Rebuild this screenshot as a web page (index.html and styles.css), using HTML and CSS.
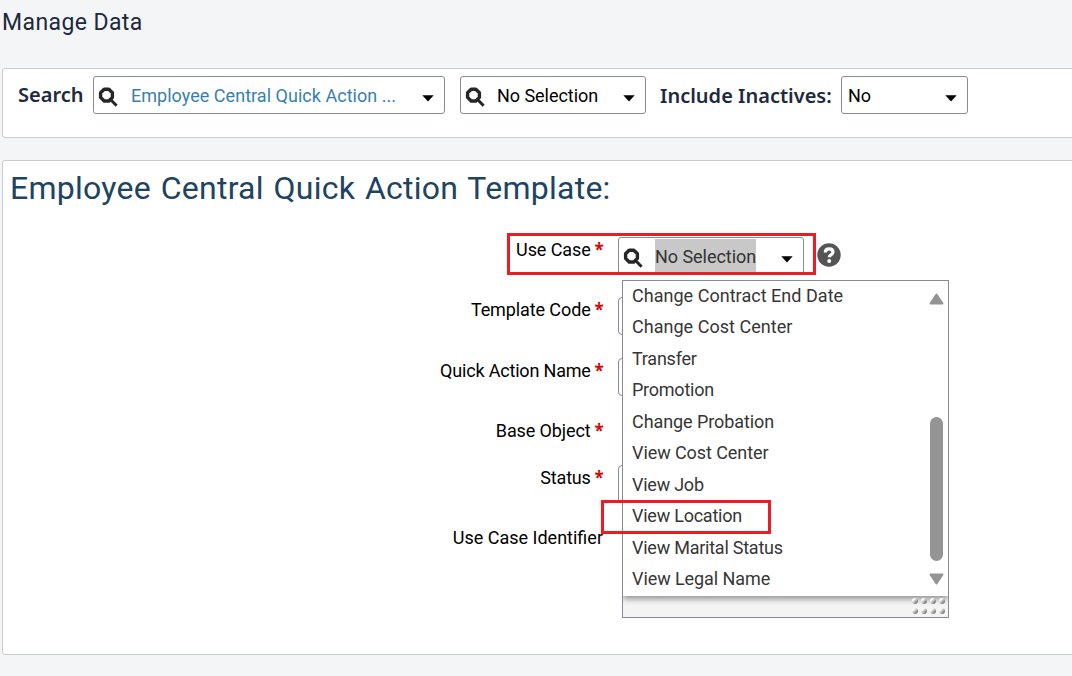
FILE: index.html
```
<!DOCTYPE html>
<html lang="en">
<head>
<meta charset="utf-8">
<title>Manage Data</title>
<link rel="stylesheet" href="styles.css">
</head>
<body>
<svg class="defs" aria-hidden="true">
  <symbol id="search" viewBox="0 0 20 20"><path d="M6.2 2.2h4.6l3.6 3.6v4.6l-3.6 3.6H6.2l-3.6-3.6V5.8z" fill="none" stroke="#262626" stroke-width="3.4" stroke-linejoin="round"/><path d="M12.8 12.8 18.6 18.8" fill="none" stroke="#262626" stroke-width="3"/></symbol>
  <symbol id="caret" viewBox="0 0 12 7"><path d="M.3.3h11.4L6 6.6z" fill="#000"/></symbol>
</svg>
<header class="page-head"><h1 class="page-title">Manage Data</h1></header>
<section class="panel search-panel">
  <span class="search-label">Search</span>
  <div class="combo combo-object"><svg class="mag"><use href="#search"/></svg><span class="value link">Employee Central Quick Action ...</span><svg class="caret"><use href="#caret"/></svg></div>
  <div class="combo combo-record"><svg class="mag"><use href="#search"/></svg><span class="value">No Selection</span><svg class="caret"><use href="#caret"/></svg></div>
  <span class="inactive-label">Include Inactives:</span>
  <div class="combo combo-inactive"><span class="value">No</span><svg class="caret"><use href="#caret"/></svg></div>
</section>
<main class="panel detail-panel">
  <h2 class="detail-title">Employee Central Quick Action Template:</h2>
  <div class="form">
    <div class="row row-case">
      <label class="label">Use Case <b>*</b></label>
      <div class="combo combo-case"><svg class="mag"><use href="#search"/></svg><span class="value selected">No Selection</span><svg class="caret"><use href="#caret"/></svg></div>
      <svg class="help" viewBox="0 0 24 24"><circle cx="12" cy="12" r="11.7" fill="#555"/><path d="M8.3 9.4c0-2.3 1.6-3.6 3.8-3.6s3.9 1.2 3.9 3.2c0 2.8-3.7 2.8-3.7 5.3" fill="none" stroke="#fff" stroke-width="3.2"/><circle cx="12.2" cy="18" r="2" fill="#fff"/></svg>
      <div class="mark mark-case"></div>
    </div>
    <div class="row row-code"><label class="label">Template Code <b>*</b></label><div class="input"></div></div>
    <div class="row row-name"><label class="label">Quick Action Name <b>*</b></label><div class="input"></div></div>
    <div class="row row-base"><label class="label">Base Object <b>*</b></label></div>
    <div class="row row-status"><label class="label">Status <b>*</b></label><div class="input"></div></div>
    <div class="row row-id"><label class="label">Use Case Identifier</label></div>
  </div>
  <div class="dropdown">
    <div class="list">
      <ul class="options">
        <li>Change Contract End Date</li>
        <li>Change Cost Center</li>
        <li class="tight">Transfer</li>
        <li class="tight">Promotion</li>
        <li class="snug">Change Probation</li>
        <li class="snug">View Cost Center</li>
        <li class="tight">View Job</li>
        <li class="tight">View Location</li>
        <li class="tight">View Marital Status</li>
        <li class="snug">View Legal Name</li>
      </ul>
      <div class="scrollbar">
        <svg class="arrow" viewBox="0 0 15 12"><path d="M7.5 1.5 13.5 10.5H1.5z" fill="#949494" stroke="#949494" stroke-width="2" stroke-linejoin="round"/></svg>
        <div class="thumb"></div>
        <svg class="arrow" viewBox="0 0 15 12"><path d="M7.5 10.5 13.5 1.5H1.5z" fill="#949494" stroke="#949494" stroke-width="2" stroke-linejoin="round"/></svg>
      </div>
    </div>
    <div class="grip-bar">
      <div class="grip"><i></i><i></i><i></i><i></i><i></i><i></i><i></i><i></i></div>
    </div>
    <div class="mark mark-location"></div>
  </div>
</main>
</body>
</html>
```

FILE: styles.css
```
* { box-sizing: border-box; }
body { margin: 0; height: 676px; overflow: hidden; background: #f4f5f7; font: 18px/24px Roboto, "Liberation Sans", sans-serif; color: #000; }
h1, h2, ul { margin: 0; padding: 0; font-weight: 400; list-style: none; }
.defs { display: none; }
.page-head { height: 68px; padding: 7px 0 0 2px; }
.page-title { font-size: 23px; line-height: 32px; color: #20293d; letter-spacing: .4px; white-space: nowrap; }
.panel { margin-left: 2px; margin-right: -4px; background: #fff; border: 1px solid #c5cdd2; border-radius: 3px; }
.search-panel { height: 70px; display: flex; align-items: flex-start; padding: 7px 0 0 15px; }
.search-label, .inactive-label { color: #20293d; font-family: "Noto Sans", sans-serif; font-weight: 600; font-size: 20px; line-height: 38px; white-space: nowrap; }
.search-label { width: 75px; }
.inactive-label { width: 181px; padding-top: 1px; }
.combo { display: flex; align-items: center; height: 38px; flex: none; background: #fff; border: 1px solid #858b98; border-radius: 3px; padding: 0 10px 0 4px; }
.combo .value { flex: none; white-space: nowrap; letter-spacing: -.04px; padding-top: 2px; }
.mag { width: 20px; height: 20px; flex: none; margin: 3px 12px 0 0; }
.caret { width: 12px; height: 7px; flex: none; margin: 7px 0 0 auto; }
.combo-object { width: 352px; margin-right: 15px; }
.combo .link { color: #387fb0; letter-spacing: .03px; margin-left: 1px; }
.combo-record { width: 186px; margin-right: 14px; }
.combo-inactive { width: 127px; padding-left: 6px; }
.detail-panel { position: relative; height: 495px; margin-top: 22px; }
.detail-title { font-size: 32px; line-height: 40px; color: #20445f; padding: 7px 0 0 7px; letter-spacing: .26px; word-spacing: 1.5px; white-space: nowrap; }
.form { padding-top: 29px; }
.row { position: relative; display: flex; align-items: flex-start; }
.label { width: 600px; padding-top: 1px; text-align: right; white-space: nowrap; flex: none; letter-spacing: -.1px; }
.label b { display: inline-block; width: 8px; text-indent: -.5px; font: 700 17px/17px "Noto Sans", sans-serif; color: #d20a0a; }
.input { width: 186px; height: 38px; margin: 0 0 0 15px; border: 1px solid #858b98; border-radius: 4px; }
.row-case { height: 60px; }
.row-case .combo { margin: 0 0 0 15px; }
.row-code { height: 61px; }
.row-name { height: 60px; }
.row-name .label, .row-status .label { letter-spacing: -.18px; }
.row-base { height: 47px; }
.row-status { height: 61px; }
.row-id .label { letter-spacing: 0; padding-top: 0; }
.combo-case { width: 186px; }
.combo .selected { background: #c8c8c8; color: #333; line-height: 32px; }
.help { width: 24px; height: 24px; margin: 6px 0 0 13px; flex: none; }
.mark { position: absolute; border: 3px solid #ed1c24; }
.mark-case { left: 504px; top: -4px; width: 309px; height: 42px; }
.dropdown { position: absolute; left: 619px; top: 119px; width: 327px; height: 338px; background: #fff; border: 1px solid #858b98; display: flex; flex-direction: column; }
.list { display: flex; height: 315px; flex: none; background: #fff; box-shadow: 0 3px 6px rgba(0,0,0,.4); clip-path: inset(0 0 -10px 0); z-index: 1; }
.options { flex: 1; padding: 0 0 0 9px; color: #363636; white-space: nowrap; letter-spacing: .03px; }
.options li { height: 31.45px; line-height: 30px; }
.options .snug { letter-spacing: -.08px; }
.options .tight { letter-spacing: -.24px; }
.scrollbar { width: 15px; margin: 12px 4px 11px 0; display: flex; flex-direction: column; align-items: center; }
.arrow { width: 15px; height: 12px; flex: none; }
.thumb { width: 13px; height: 144px; margin: 112px 0 12px; border-radius: 7px; background: #949494; flex: none; }
.grip-bar { flex: 1; background: #f4f4f4; display: flex; justify-content: flex-end; padding: 2px 3px 0 0; }
.grip { position: relative; z-index: 2; display: grid; grid-template-columns: repeat(4, 6px); grid-auto-rows: 6px; gap: 4px 3px; }
.grip i { border-radius: 50%; background: linear-gradient(135deg, #fff 25%, #858585 75%); }
.mark-location { left: -22px; top: 219px; width: 170px; height: 34px; z-index: 2; }
```
